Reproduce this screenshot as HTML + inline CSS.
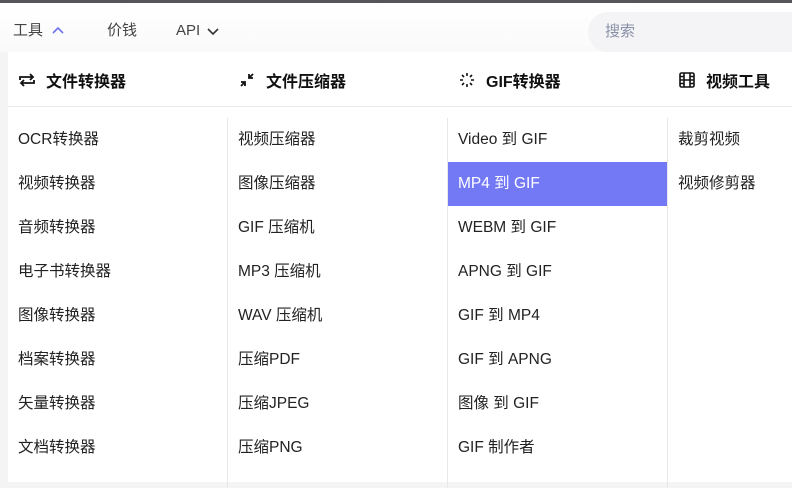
<!DOCTYPE html>
<html><head><meta charset="utf-8"><style>
*{margin:0;padding:0;box-sizing:border-box}
body{width:792px;height:477px;overflow:hidden;background:#f4f4f5;font-family:"Liberation Sans","Noto Sans CJK SC",sans-serif;position:relative}
.top{position:absolute;left:0;top:0;width:792px;height:3px;background:#55565c}
.nav{position:absolute;left:0;top:3px;width:792px;height:49px;background:linear-gradient(#fff,#fafafa)}
.nav span{position:absolute;top:16px;height:24px;font-size:15px;color:#444;display:flex;align-items:center;line-height:24px}
.nav svg{display:block}
.search{position:absolute;left:588px;top:9px;width:220px;height:40px;border-radius:20px;background:#f4f4f6;color:#8a8fa8;font-size:15px;line-height:40px;padding-left:17px}
.panel{position:absolute;left:8px;top:52px;width:800px;height:430px;background:#fff}
.head{position:absolute;left:0;top:0;width:800px;height:55px;border-bottom:1px solid #e8e8ec}
.h{position:absolute;top:16px;font-size:16px;font-weight:bold;color:#111;display:flex;align-items:center;gap:10px}
.col{position:absolute;top:66px;width:220px;height:370px;border-right:1px solid #e8e8ea}
.it{height:44px;line-height:44px;padding-left:10px;font-size:15.5px;color:#222}
.sel{background:#7379f5;color:#fff}
</style></head><body>
<div class="top"></div>
<div class="nav">
<span style="left:13px">工具<svg width="14" height="10" viewBox="0 0 14 10" style="margin-left:8px"><path d="M2 7l5-5 5 5" stroke="#6b73f0" stroke-width="1.6" fill="none"/></svg></span>
<span style="left:107px">价钱</span>
<span style="left:176px">API<svg width="14" height="10" viewBox="0 0 14 10" style="margin-left:6px"><path d="M2 3l5 5 5-5" stroke="#333" stroke-width="1.6" fill="none"/></svg></span>
<div class="search">搜索</div>
</div>
<div class="panel">
<div class="head">
<div class="h" style="left:10px"><svg width="18" height="18" viewBox="0 0 18 18" fill="none" stroke="#111" stroke-width="1.8"><path d="M2 9V6h13M12 3l3 3-3 3M16 9v3H3M6 15l-3-3 3-3"/></svg>文件转换器</div>
<div class="h" style="left:230px"><svg width="18" height="18" viewBox="0 0 18 18" fill="none" stroke="#111" stroke-width="1.8"><path d="M15 3l-4 4M11 3v4h4M3 15l4-4M7 15v-4H3"/></svg>文件压缩器</div>
<div class="h" style="left:450px"><svg width="18" height="18" viewBox="0 0 18 18" fill="none" stroke="#111" stroke-width="1.6"><path d="M9 2v3M9 13v3M2 9h3M13 9h3M4 4l2 2M12 12l2 2M14 4l-2 2M4 14l2-2"/></svg>GIF转换器</div>
<div class="h" style="left:670px"><svg width="18" height="18" viewBox="0 0 18 18" fill="none" stroke="#111" stroke-width="1.6"><rect x="2" y="2" width="14" height="14" rx="1.5"/><path d="M6 2v14M12 2v14M2 9h14M2 5.5h4M2 12.5h4M12 5.5h4M12 12.5h4"/></svg>视频工具</div>
</div>
<div class="col" style="left:0"><div class="it">OCR转换器</div><div class="it">视频转换器</div><div class="it">音频转换器</div><div class="it">电子书转换器</div><div class="it">图像转换器</div><div class="it">档案转换器</div><div class="it">矢量转换器</div><div class="it">文档转换器</div></div>
<div class="col" style="left:220px"><div class="it">视频压缩器</div><div class="it">图像压缩器</div><div class="it">GIF 压缩机</div><div class="it">MP3 压缩机</div><div class="it">WAV 压缩机</div><div class="it">压缩PDF</div><div class="it">压缩JPEG</div><div class="it">压缩PNG</div></div>
<div class="col" style="left:440px"><div class="it">Video 到 GIF</div><div class="it sel">MP4 到 GIF</div><div class="it">WEBM 到 GIF</div><div class="it">APNG 到 GIF</div><div class="it">GIF 到 MP4</div><div class="it">GIF 到 APNG</div><div class="it">图像 到 GIF</div><div class="it">GIF 制作者</div></div>
<div class="col" style="left:660px;border-right:none"><div class="it">裁剪视频</div><div class="it">视频修剪器</div></div>
</div>
</body></html>
